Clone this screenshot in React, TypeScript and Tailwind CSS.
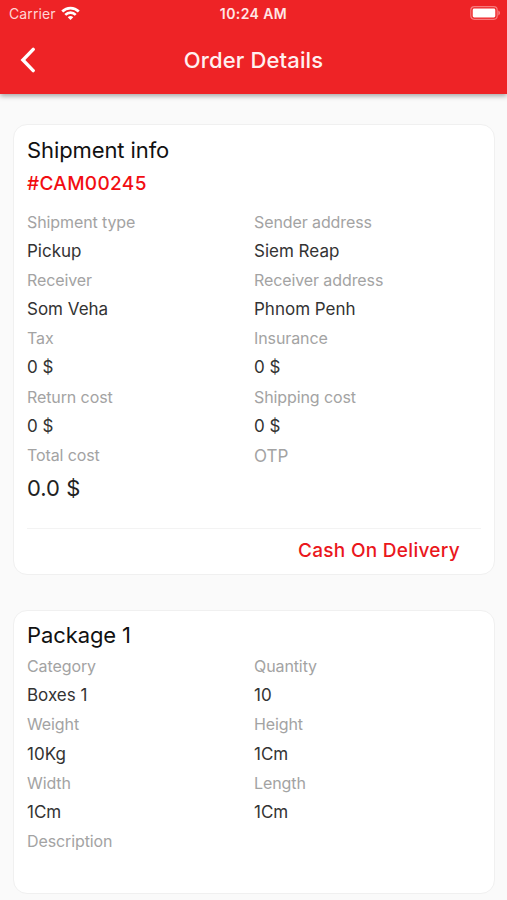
type Field = {
    label: string
    value: string
}

const shipment: Field[] = [
    { label: "Shipment type", value: "Pickup" },
    { label: "Sender address", value: "Siem Reap" },
    { label: "Receiver", value: "Som Veha" },
    { label: "Receiver address", value: "Phnom Penh" },
    { label: "Tax", value: "0 $" },
    { label: "Insurance", value: "0 $" },
    { label: "Return cost", value: "0 $" },
    { label: "Shipping cost", value: "0 $" },
]

const packageInfo: Field[] = [
    { label: "Category", value: "Boxes 1" },
    { label: "Quantity", value: "10" },
    { label: "Weight", value: "10Kg" },
    { label: "Height", value: "1Cm" },
    { label: "Width", value: "1Cm" },
    { label: "Length", value: "1Cm" },
]

const Label = ({ children }: { children: string }) => (
    <div className="h-[29.2px] text-[16px] leading-[29.2px] tracking-[-0.1px] text-[#a3a3a3]">{children}</div>
)

const FieldGrid = ({ fields }: { fields: Field[] }) => (
    <div className="grid grid-cols-2">
        {fields.map((field) => (
            <div key={field.label}>
                <Label>{field.label}</Label>
                <div className="h-[29.2px] text-[17px] leading-[29.2px] text-[#333333]">{field.value}</div>
            </div>
        ))}
    </div>
)

const StatusBar = () => (
    <div className="grid h-[27px] grid-cols-3 items-center px-[9px] text-[14px]">
        <div className="flex items-center gap-[5.5px] text-[#ffd5d5]">
            <span className="tracking-[0.1px]">Carrier</span>
            <svg className="-mt-px" width="19" height="15" viewBox="0 0 20 15" fill="none" stroke="white" strokeWidth="2.8">
                <path d="M1.3 5.4a12.3 12.3 0 0 1 17.4 0" />
                <path d="M4.5 8.9a7.8 7.8 0 0 1 11 0" />
                <path d="M10 14.4 7.1 11.5a4.1 4.1 0 0 1 5.8 0Z" fill="white" stroke="none" />
            </svg>
        </div>
        <div className="text-center font-semibold tracking-[0.4px] text-[#ffe6e6]">10:24 AM</div>
        <svg className="-mr-[3px] -mt-px justify-self-end" width="31" height="14" viewBox="0 0 31 14" fill="none">
            <rect x="0.8" y="0.7" width="26.4" height="12.6" rx="3.5" stroke="#f7797c" strokeWidth="1.2" />
            <rect x="2.7" y="2.5" width="22.6" height="9" rx="1.4" fill="white" />
            <path d="M28.4 4.6c2 .7 2 4.1 0 4.8Z" fill="#f7898c" />
        </svg>
    </div>
)

const App = () => {
    return (
        <div className="h-[900px] w-full overflow-hidden bg-[#fafafa] font-['Inter',sans-serif]">
            <header className="h-[94px] bg-[#ee2326] shadow-[0_2px_5px_rgba(0,0,0,0.35)]">
                <StatusBar />
                <div className="grid h-[66px] grid-cols-[80px_1fr_80px] items-center">
                    <svg className="ml-5" width="16" height="26" viewBox="0 0 16 26" fill="none" stroke="white" strokeWidth="3.4">
                        <path d="M13.2 2.4 2.9 13l10.3 10.6" strokeLinecap="round" />
                    </svg>
                    <h1 className="text-center text-[22px] font-medium tracking-[0.15px] text-[#fff0f0]">Order Details</h1>
                </div>
            </header>

            <main className="flex flex-col gap-[35px] pt-[30px] pr-3 pl-[13px]">
                <section className="h-[451px] rounded-[14px] border border-[#f0f0f0] bg-white px-[13px]">
                    <h2 className="pt-[9px] text-[22px] leading-8 tracking-[-0.1px] text-[#111111]">Shipment info</h2>
                    <div className="h-[41.5px] pt-1 text-[19px] leading-7 font-medium tracking-[0.35px] text-[#f20d12]">#CAM00245</div>
                    <FieldGrid fields={shipment} />
                    <div className="grid h-[86.7px] grid-cols-2">
                        <div>
                            <Label>Total cost</Label>
                            <div className="text-[22px] leading-[37px] text-[#222222]">0.0 $</div>
                        </div>
                        <div className="text-[17px] leading-[31px] text-[#a3a3a3]">OTP</div>
                    </div>
                    <div className="border-t border-[#f3f3f3] pt-[6px] pr-[21px] text-right text-[19px] leading-8 font-medium tracking-[0.3px] text-[#ea171c]">
                        Cash On Delivery
                    </div>
                </section>

                <section className="h-[284px] rounded-[14px] border border-[#f0f0f0] bg-white px-[13px]">
                    <h2 className="h-[41px] pt-2 text-[22px] leading-8 tracking-[-0.1px] text-[#111111]">Package 1</h2>
                    <FieldGrid fields={packageInfo} />
                    <Label>Description</Label>
                </section>
            </main>
        </div>
    )
}

export default App
